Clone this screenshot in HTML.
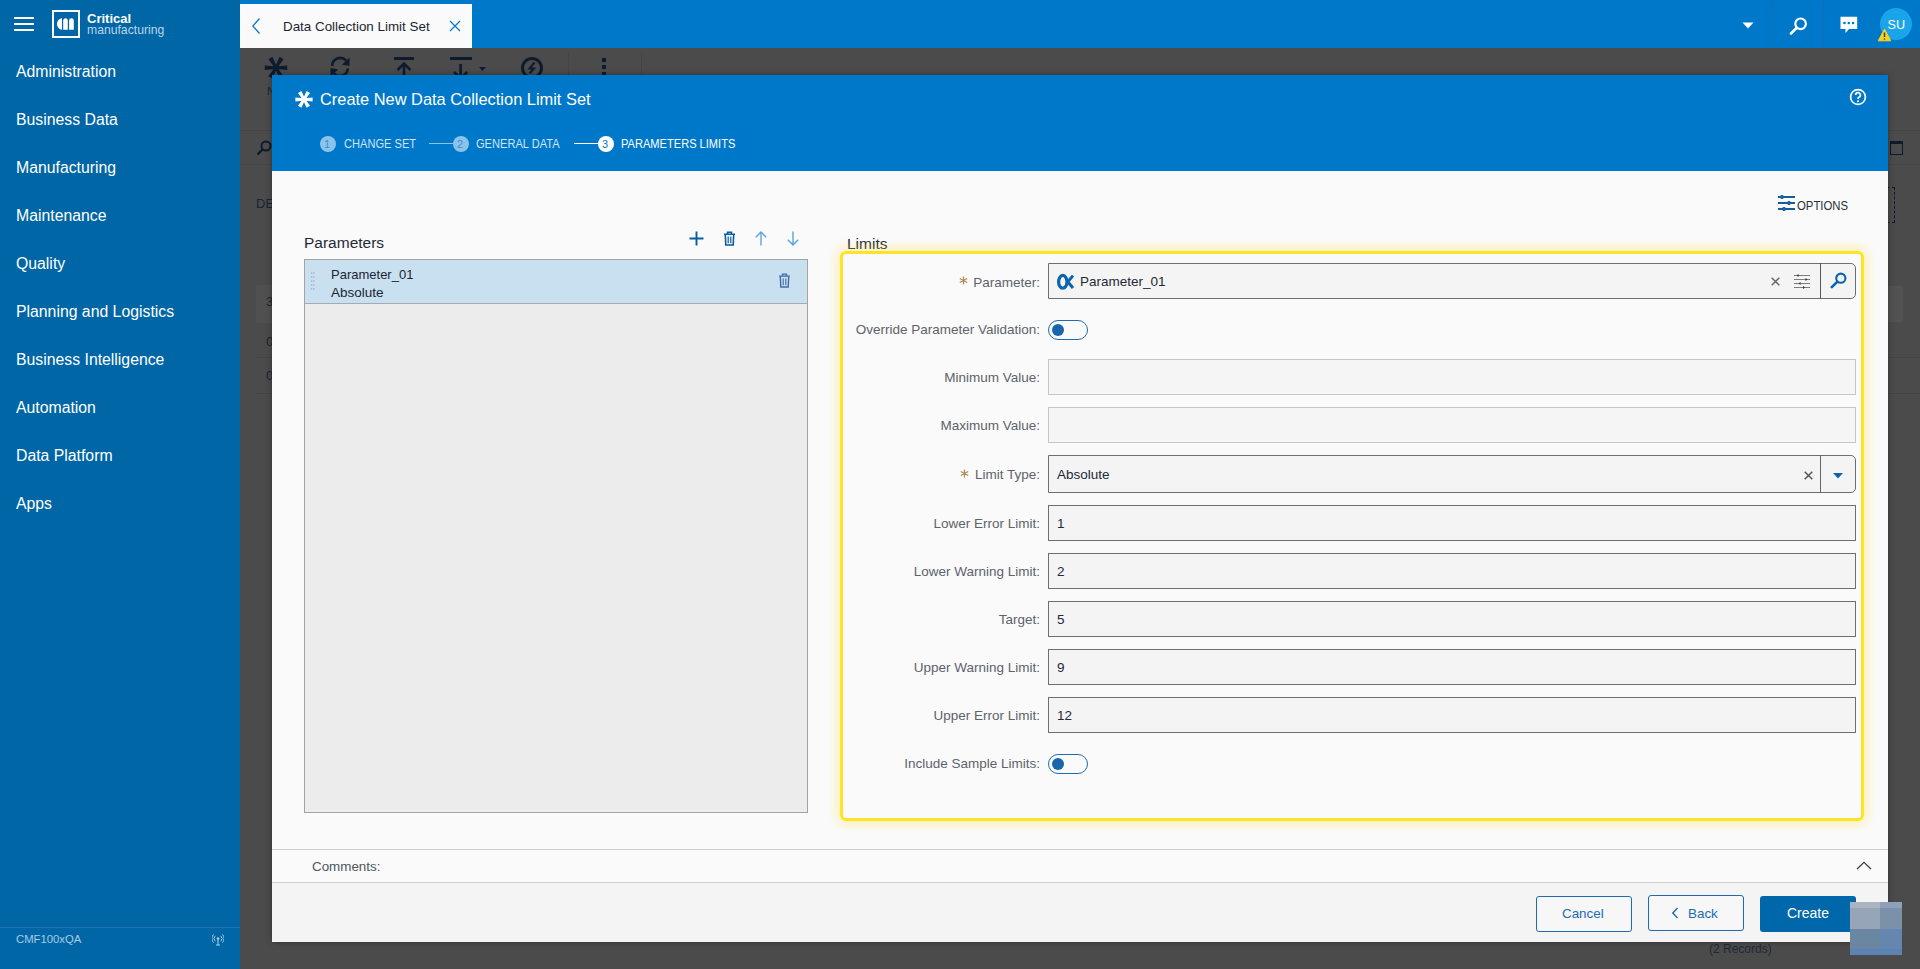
<!DOCTYPE html>
<html><head><meta charset="utf-8">
<style>
*{margin:0;padding:0;box-sizing:border-box}
html,body{width:1920px;height:969px;overflow:hidden;background:#4b4b4b;font-family:"Liberation Sans",sans-serif}
.a{position:absolute}
.t{position:absolute;white-space:nowrap;line-height:1}
#side{left:0;top:0;width:240px;height:969px;background:#0066a6}
#top{left:240px;top:0;width:1680px;height:48px;background:#0078c9}
.nav{left:16px;color:#fff;font-size:15.8px}
#modal{left:272px;top:75px;width:1616px;height:867px;background:#fafafa;box-shadow:0 0 6px rgba(0,0,0,.35)}
#mh{left:0;top:0;width:1616px;height:96px;background:#0078c9}
.lbl{color:#5d636a;font-size:13.5px;text-align:right;width:300px;left:468px}
.inp{left:1048px;width:808px;height:36px;background:#f4f4f4;border:1px solid #6e6e6e}
.inp.dis{border-color:#c6c6c6;background:#f5f5f5}
.val{color:#1f2a36;font-size:13.5px;left:1057px}
.tog{left:776px;width:40px;height:20px;border:1.5px solid #1d6bb0;border-radius:10px;background:#fafafa}
.tog i{position:absolute;left:3px;top:2.5px;width:12px;height:12px;border-radius:50%;background:#1a66ad}
</style></head><body>
<div id="side" class="a">
  <!-- hamburger -->
  <div class="a" style="left:14px;top:17px;width:20px;height:2px;background:#fff"></div>
  <div class="a" style="left:14px;top:23px;width:20px;height:2px;background:#fff"></div>
  <div class="a" style="left:14px;top:29px;width:20px;height:2px;background:#fff"></div>
  <!-- logo -->
  <div class="a" style="left:52px;top:10px;width:28px;height:28px;border:2px solid #fff"></div>
  <svg class="a" style="left:50px;top:8px" width="32" height="32" viewBox="0 0 32 32">
    <path d="M12 10.2 A5 5.8 0 0 0 12 21.8 Z" fill="#fff"/>
    <path d="M13.2 21.8 V12.5 A2.3 2.3 0 0 1 17.8 12.5 V21.8Z" fill="#fff"/>
    <path d="M19.1 21.8 V12.5 A2.35 2.35 0 0 1 23.8 12.5 V21.8Z" fill="#fff"/>
  </svg>
  <div class="t" style="left:87px;top:12px;font-size:13px;font-weight:bold;color:#fff">Critical</div>
  <div class="t" style="left:87px;top:24px;font-size:12.2px;color:#bcd5ea">manufacturing</div>

  <div class="t nav" style="top:64px">Administration</div>
  <div class="t nav" style="top:112px">Business Data</div>
  <div class="t nav" style="top:160px">Manufacturing</div>
  <div class="t nav" style="top:208px">Maintenance</div>
  <div class="t nav" style="top:256px">Quality</div>
  <div class="t nav" style="top:304px">Planning and Logistics</div>
  <div class="t nav" style="top:352px">Business Intelligence</div>
  <div class="t nav" style="top:400px">Automation</div>
  <div class="t nav" style="top:448px">Data Platform</div>
  <div class="t nav" style="top:496px">Apps</div>

  <div class="a" style="left:0;top:927px;width:240px;height:1px;background:#1f74ae"></div>
  <svg class="a" style="left:212px;top:934px" width="12" height="12" viewBox="0 0 12 12"><circle cx="6" cy="4.5" r="1.3" fill="#a9cbe6"/><path d="M6 5 V11 M4 11 H8" stroke="#a9cbe6" stroke-width="1.1"/><path d="M3.2 1.8 A3.8 3.8 0 0 0 3.2 7.2 M8.8 1.8 A3.8 3.8 0 0 1 8.8 7.2 M1.5 0.5 A5.8 5.8 0 0 0 1.5 8.5 M10.5 0.5 A5.8 5.8 0 0 1 10.5 8.5" fill="none" stroke="#a9cbe6" stroke-width="1"/></svg>
  <div class="t" style="left:16px;top:934px;font-size:11.3px;color:#a9cbe6">CMF100xQA</div>
</div>

<div id="top" class="a">
  <div class="a" style="left:0;top:4px;width:232px;height:44px;background:#fafafa"></div>
  <svg class="a" style="left:11px;top:17px" width="10" height="18" viewBox="0 0 10 18"><path d="M8.5 1.5 L1.8 9 L8.5 16.5" fill="none" stroke="#0a78c8" stroke-width="1.3"/></svg>
  <div class="t" style="left:43px;top:20px;font-size:13.4px;color:#1b2633">Data Collection Limit Set</div>
  <svg class="a" style="left:209px;top:20px" width="12" height="12" viewBox="0 0 12 12"><path d="M1 1 L11 11 M11 1 L1 11" fill="none" stroke="#0a78c8" stroke-width="1.3"/></svg>
  <!-- dropdown -->
  <svg class="a" style="left:1502px;top:22px" width="12" height="7" viewBox="0 0 12 7"><path d="M0.5 0.5 L11.5 0.5 L6 6.5Z" fill="#fff"/></svg>
  <div class="a" style="left:1532px;top:0;width:0;height:48px;border-left:1px dotted #2366a0"></div>
  <div class="a" style="left:1583px;top:0;width:0;height:48px;border-left:1px dotted #2366a0"></div>
  <!-- search -->
  <svg class="a" style="left:1549px;top:17px" width="19" height="18" viewBox="0 0 19 18"><circle cx="11.6" cy="6.8" r="5.3" fill="none" stroke="#fff" stroke-width="2.2"/><path d="M7.8 10.8 L2 16.5" stroke="#fff" stroke-width="2.6" stroke-linecap="round"/></svg>
  <!-- chat -->
  <svg class="a" style="left:1600px;top:16px" width="18" height="18" viewBox="0 0 18 18"><path d="M0.5 0.7 H17.2 V13 H9 L5.5 17 V13 H0.5Z" fill="#fff"/><circle cx="4.5" cy="7" r="1.3" fill="#0078c9"/><circle cx="8.8" cy="7" r="1.3" fill="#0078c9"/><circle cx="13.1" cy="7" r="1.3" fill="#0078c9"/></svg>
  <!-- avatar -->
  <div class="a" style="left:1640px;top:8px;width:32px;height:32px;border-radius:50%;background:#1aa5ea"></div>
  <div class="t" style="left:1647.5px;top:18.5px;font-size:12.6px;color:#fff">SU</div>
  <svg class="a" style="left:1637px;top:28px" width="15" height="14" viewBox="0 0 15 14"><path d="M7.5 1.2 L13.8 12.8 H1.2Z" fill="#f7d21e" stroke="#f7d21e" stroke-width="1" stroke-linejoin="round"/><path d="M7.5 4.5 V9" stroke="#3a3a2a" stroke-width="1.4"/><circle cx="7.5" cy="11" r="0.8" fill="#3a3a2a"/></svg>
</div>

<!-- background page behind overlay -->
<div class="a" style="left:240px;top:48px;width:1680px;height:921px;background:#4b4b4b">
  <!-- toolbar icons -->
  <svg class="a" style="left:24px;top:8px" width="24" height="24" viewBox="0 0 24 24"><path d="M12.00 12.90 L23.20 14.00 L23.20 9.40 L12.00 10.50Z M10.96 12.30 L15.61 22.55 L19.59 20.25 L13.04 11.10Z M10.96 11.10 L4.41 20.25 L8.39 22.55 L13.04 12.30Z M12.00 10.50 L0.80 9.40 L0.80 14.00 L12.00 12.90Z M13.04 11.10 L8.39 0.85 L4.41 3.15 L10.96 12.30Z M13.04 12.30 L19.59 3.15 L15.61 0.85 L10.96 11.10Z" fill="#0e1b2d"/></svg>
  <svg class="a" style="left:88px;top:7px" width="24" height="24" viewBox="0 0 24 24"><path d="M4.2 11 A8 8 0 0 1 18 5.5" fill="none" stroke="#0e1b2d" stroke-width="2.6"/><path d="M21.5 2.5 L21.5 10.8 L13.8 9.8Z" fill="#0e1b2d"/><path d="M19.8 13.5 A8 8 0 0 1 6 18.5" fill="none" stroke="#0e1b2d" stroke-width="2.6"/><path d="M2.5 13 L2.5 21.5 L10.2 14.5Z" fill="#0e1b2d"/></svg>
  <svg class="a" style="left:152px;top:7px" width="24" height="24" viewBox="0 0 24 24"><path d="M2 3.5 H22" stroke="#0e1b2d" stroke-width="3"/><path d="M12 9 V24" stroke="#0e1b2d" stroke-width="2.6"/><path d="M5.5 15 L12 8.5 L18.5 15" fill="none" stroke="#0e1b2d" stroke-width="2.6"/></svg>
  <svg class="a" style="left:208px;top:7px" width="24" height="24" viewBox="0 0 24 24"><path d="M2 3.5 H24" stroke="#0e1b2d" stroke-width="3"/><path d="M12.6 9 V23" stroke="#0e1b2d" stroke-width="2.6"/><path d="M6 17 L12.6 23.5 L19.2 17" fill="none" stroke="#0e1b2d" stroke-width="2.6"/></svg>
  <svg class="a" style="left:239px;top:19px" width="7" height="4" viewBox="0 0 7 4"><path d="M0 0 H7 L3.5 4Z" fill="#0e1b2d"/></svg>
  <svg class="a" style="left:280px;top:8px" width="24" height="24" viewBox="0 0 24 24"><circle cx="12" cy="12" r="9.5" fill="none" stroke="#0e1b2d" stroke-width="3"/><path d="M14.5 6.5 L9.5 12.5 H14 L9.5 17.5" fill="none" stroke="#0e1b2d" stroke-width="2"/></svg>
  <div class="a" style="left:328px;top:5px;width:1px;height:27px;background:#444"></div>
  <div class="a" style="left:362px;top:10px;width:4px;height:4px;background:#0e1b2d"></div>
  <div class="a" style="left:362px;top:17px;width:4px;height:4px;background:#0e1b2d"></div>
  <div class="a" style="left:362px;top:24px;width:4px;height:3px;background:#0e1b2d"></div>
  <div class="a" style="left:401px;top:5px;width:1px;height:27px;background:#444"></div>
  <div class="t" style="left:27px;top:38px;font-size:11px;color:#1a2433">N</div>
  <!-- left strip details -->
  <div class="a" style="left:0;top:82px;width:32px;height:1px;background:#444"></div>
  <svg class="a" style="left:16px;top:92px" width="16" height="16" viewBox="0 0 16 16"><circle cx="10" cy="6" r="4.5" fill="none" stroke="#0e1b2d" stroke-width="2"/><path d="M6.8 9.2 L1.5 14.5" stroke="#0e1b2d" stroke-width="2.4"/></svg>
  <div class="a" style="left:0;top:116px;width:32px;height:1px;background:#444"></div>
  <div class="t" style="left:16px;top:149px;font-size:13px;color:#1a2433">DE</div>
  <div class="a" style="left:16px;top:237px;width:16px;height:38px;background:#505050"></div>
  <div class="t" style="left:26px;top:247px;font-size:13px;color:#1a2433">3</div>
  <div class="t" style="left:26px;top:287px;font-size:13px;color:#1a2433">0</div>
  <div class="a" style="left:16px;top:309px;width:16px;height:1px;background:#444"></div>
  <div class="t" style="left:26px;top:321px;font-size:13px;color:#1a2433">0</div>
  <div class="a" style="left:16px;top:345px;width:16px;height:1px;background:#444"></div>
  <!-- right strip details -->
  <div class="a" style="left:1648px;top:82px;width:32px;height:1px;background:#444"></div>
  <div class="a" style="left:1650px;top:93px;width:13px;height:14px;border:1px solid #0e1b2d;border-top-width:3px"></div>
  <div class="a" style="left:1648px;top:116px;width:32px;height:1px;background:#444"></div>
  <div class="a" style="left:1630px;top:139px;width:25px;height:36px;border:1px dashed #0e1b2d"></div>
  <div class="a" style="left:1648px;top:238px;width:15px;height:36px;background:#525252"></div>
  <div class="a" style="left:1648px;top:309px;width:32px;height:1px;background:#444"></div>
  <div class="a" style="left:1648px;top:345px;width:32px;height:1px;background:#444"></div>
  <div class="t" style="left:1469px;top:895px;font-size:12px;color:#1f2936">(2 Records)</div>
</div>

<div id="modal" class="a">
  <div id="mh" class="a">
    <svg class="a" style="left:23px;top:15px" width="18" height="18" viewBox="0 0 18 18"><path d="M9.00 10.55 L17.60 11.40 L17.60 7.40 L9.00 8.25Z M8.00 9.97 L11.57 17.85 L15.03 15.85 L10.00 8.83Z M8.00 8.83 L2.97 15.85 L6.43 17.85 L10.00 9.97Z M9.00 8.25 L0.40 7.40 L0.40 11.40 L9.00 10.55Z M10.00 8.82 L6.43 0.95 L2.97 2.95 L8.00 9.98Z M10.00 9.97 L15.03 2.95 L11.57 0.95 L8.00 8.83Z" fill="#fff"/></svg>
    <div class="t" style="left:48px;top:16px;font-size:16.4px;color:#fff">Create New Data Collection Limit Set</div>
    <svg class="a" style="left:1577px;top:13px" width="18" height="18" viewBox="0 0 18 18"><circle cx="9" cy="9" r="7.4" fill="none" stroke="#fff" stroke-width="1.7"/><path d="M6.6 7 A2.4 2.4 0 1 1 9.8 9.3 C9 9.6 9 10.2 9 11" fill="none" stroke="#fff" stroke-width="1.7"/><circle cx="9" cy="13.3" r="1.05" fill="#fff"/></svg>
    <!-- stepper -->
    <div class="a" style="left:48px;top:61px;width:16px;height:16px;border-radius:50%;background:#8cc3eb"></div>
    <div class="t" style="left:52px;top:64px;font-size:11px;color:#3f8fd0">1</div>
    <div class="t" style="left:71.5px;top:63px;font-size:12.6px;color:#cfe6f7;transform:scaleX(0.88);transform-origin:0 0">CHANGE SET</div>
    <div class="a" style="left:157px;top:68px;width:24px;height:1px;background:#8cc3eb"></div>
    <div class="a" style="left:181px;top:61px;width:16px;height:16px;border-radius:50%;background:#8cc3eb"></div>
    <div class="t" style="left:185px;top:64px;font-size:11px;color:#3f8fd0">2</div>
    <div class="t" style="left:204px;top:63px;font-size:12.6px;color:#cfe6f7;transform:scaleX(0.88);transform-origin:0 0">GENERAL DATA</div>
    <div class="a" style="left:302px;top:68px;width:24px;height:1px;background:#fff"></div>
    <div class="a" style="left:326px;top:61px;width:16px;height:16px;border-radius:50%;background:#fff"></div>
    <div class="t" style="left:330px;top:64px;font-size:11px;color:#0078c9">3</div>
    <div class="t" style="left:349px;top:63px;font-size:12.6px;color:#fff;transform:scaleX(0.88);transform-origin:0 0">PARAMETERS LIMITS</div>
  </div>
  <!-- options -->
  <svg class="a" style="left:1506px;top:120px" width="17" height="17" viewBox="0 0 17 17"><path d="M0 2 H17 M0 8 H17 M0 14 H17" stroke="#1a5c96" stroke-width="1.8"/><path d="M4 0 V4 M11 6 V10 M6 12 V16" stroke="#1a66aa" stroke-width="2.6"/></svg>
  <div class="t" style="left:1525px;top:124.5px;font-size:12.6px;color:#26313c;transform:scaleX(0.9);transform-origin:0 0">OPTIONS</div>

  <!-- parameters list -->
  <div class="t" style="left:32px;top:160px;font-size:15.5px;color:#1e2a36">Parameters</div>
  <svg class="a" style="left:417px;top:156px" width="15" height="15" viewBox="0 0 15 15"><path d="M7.5 0.5 V14.5 M0.5 7.5 H14.5" stroke="#0a5c9e" stroke-width="1.9"/></svg>
  <svg class="a" style="left:451px;top:156px" width="13" height="15" viewBox="0 0 13 15"><path d="M1 3.2 H12 M4.5 3 V1.2 H8.5 V3" fill="none" stroke="#0a5c9e" stroke-width="1.5"/><path d="M2.3 3.5 L2.8 14 H10.2 L10.7 3.5" fill="none" stroke="#0a5c9e" stroke-width="1.6"/><path d="M5.2 5.5 V12.3 M7.8 5.5 V12.3" stroke="#0a5c9e" stroke-width="1.2"/></svg>
  <svg class="a" style="left:483px;top:156px" width="12" height="15" viewBox="0 0 12 15"><path d="M6 1 V14.5 M0.8 6.3 L6 1 L11.2 6.3" fill="none" stroke="#5aa6dc" stroke-width="1.4"/></svg>
  <svg class="a" style="left:515px;top:156px" width="12" height="15" viewBox="0 0 12 15"><path d="M6 0.5 V14 M0.8 8.7 L6 14 L11.2 8.7" fill="none" stroke="#5aa6dc" stroke-width="1.4"/></svg>
  <div class="a" style="left:32px;top:184px;width:504px;height:554px;background:#ececec;border:1px solid #a3a3a3"></div>
  <div class="a" style="left:33px;top:185px;width:502px;height:44px;background:#c9e0f1;border-bottom:1px solid #a3acb3"></div>
  <svg class="a" style="left:39px;top:197px" width="4" height="19" viewBox="0 0 4 19"><path d="M0 1 H4 M0 5 H4 M0 9 H4 M0 13 H4 M0 17 H4" stroke="#8c9aa6" stroke-width="1.2" stroke-dasharray="1.2 1"/></svg>
  <div class="t" style="left:59px;top:192.5px;font-size:13px;color:#1b2633">Parameter_01</div>
  <div class="t" style="left:59px;top:210.5px;font-size:13.5px;color:#1b2633">Absolute</div>
  <svg class="a" style="left:506px;top:198px" width="13" height="15" viewBox="0 0 13 15"><path d="M1 3.2 H12 M4.5 3 V1.2 H8.5 V3" fill="none" stroke="#3f6da3" stroke-width="1.3"/><path d="M2.3 3.5 L2.8 14 H10.2 L10.7 3.5" fill="none" stroke="#3f6da3" stroke-width="1.4"/><path d="M5.2 5.5 V12.3 M7.8 5.5 V12.3" stroke="#3f6da3" stroke-width="1.1"/></svg>

  <!-- limits -->
  <div class="t" style="left:575px;top:161px;font-size:15.5px;color:#1e2a36">Limits</div>
  <div class="a" style="left:568px;top:176px;width:1024px;height:570px;border:3px solid #ffe22a;border-radius:6px;box-shadow:0 0 10px 4px rgba(255,226,60,.35)"></div>
  <div class="t lbl" style="top:201px">Parameter:</div>
  <svg class="a" style="left:687px;top:201px" width="9" height="9" viewBox="0 0 9 9"><path d="M4.5 0.5 V8.5 M0.8 2.5 L8.2 6.5 M8.2 2.5 L0.8 6.5" stroke="#b38a52" stroke-width="1.3"/></svg>
  <div class="a inp" style="left:776px;top:188px;border-radius:0 5px 5px 0"></div>
  <div class="a" style="left:1548px;top:188px;width:1px;height:36px;background:#555"></div>
  <svg class="a" style="left:780px;top:193px" width="28" height="28" viewBox="0 0 28 28"><ellipse cx="10.8" cy="13.8" rx="4.2" ry="6.4" fill="none" stroke="#0a64ad" stroke-width="3.2"/><path d="M21 7.6 L15.8 13.8 L21 20" fill="none" stroke="#0a64ad" stroke-width="3"/></svg>
  <div class="t val" style="left:808px;top:200px">Parameter_01</div>
  <svg class="a" style="left:1499px;top:202px" width="9" height="9" viewBox="0 0 9 9"><path d="M0.7 0.7 L8.3 8.3 M8.3 0.7 L0.7 8.3" stroke="#666" stroke-width="1.5"/></svg>
  <svg class="a" style="left:1522px;top:199px" width="16" height="15" viewBox="0 0 16 15"><path d="M0 1.5 H16 M0 5.5 H16 M0 9.5 H16 M0 13.5 H16" stroke="#7d7d7d" stroke-width="1"/><path d="M2.5 1.5 L4.5 0 V3Z M13.5 5.5 L11.5 4 V7Z M4.5 9.5 L6.5 8 V11Z M11 13.5 L9 12 V15Z" fill="#333"/></svg>
  <svg class="a" style="left:1558px;top:197px" width="17" height="17" viewBox="0 0 17 17"><circle cx="10.8" cy="6.2" r="4.6" fill="none" stroke="#0a64ad" stroke-width="2.1"/><path d="M7.4 9.6 L1.8 15.2" stroke="#0a64ad" stroke-width="2.6" stroke-linecap="round"/></svg>
  <div class="t lbl" style="top:248px">Override Parameter Validation:</div>
  <div class="a tog" style="top:245px"><i></i></div>
  <div class="t lbl" style="top:296px">Minimum Value:</div>
  <div class="a inp dis" style="left:776px;top:284px"></div>
  <div class="t lbl" style="top:344px">Maximum Value:</div>
  <div class="a inp dis" style="left:776px;top:332px"></div>
  <div class="t lbl" style="top:393px">Limit Type:</div>
  <svg class="a" style="left:688px;top:394px" width="9" height="9" viewBox="0 0 9 9"><path d="M4.5 0.5 V8.5 M0.8 2.5 L8.2 6.5 M8.2 2.5 L0.8 6.5" stroke="#b38a52" stroke-width="1.3"/></svg>
  <div class="a inp" style="left:776px;top:380px;height:38px;border-radius:0 5px 5px 0"></div>
  <div class="a" style="left:1548px;top:380px;width:1px;height:38px;background:#666"></div>
  <div class="t val" style="left:785px;top:393px">Absolute</div>
  <svg class="a" style="left:1532px;top:396px" width="9" height="9" viewBox="0 0 9 9"><path d="M0.7 0.7 L8.3 8.3 M8.3 0.7 L0.7 8.3" stroke="#555" stroke-width="1.5"/></svg>
  <svg class="a" style="left:1561px;top:397.5px" width="10" height="6" viewBox="0 0 10 6"><path d="M0 0 H10 L5 5.5Z" fill="#0a64ad"/></svg>
  <div class="t lbl" style="top:442px">Lower Error Limit:</div>
  <div class="a inp" style="left:776px;top:430px"></div>
  <div class="t val" style="left:785px;top:442px">1</div>
  <div class="t lbl" style="top:490px">Lower Warning Limit:</div>
  <div class="a inp" style="left:776px;top:478px"></div>
  <div class="t val" style="left:785px;top:490px">2</div>
  <div class="t lbl" style="top:538px">Target:</div>
  <div class="a inp" style="left:776px;top:526px"></div>
  <div class="t val" style="left:785px;top:538px">5</div>
  <div class="t lbl" style="top:586px">Upper Warning Limit:</div>
  <div class="a inp" style="left:776px;top:574px"></div>
  <div class="t val" style="left:785px;top:586px">9</div>
  <div class="t lbl" style="top:634px">Upper Error Limit:</div>
  <div class="a inp" style="left:776px;top:622px"></div>
  <div class="t val" style="left:785px;top:634px">12</div>
  <div class="t lbl" style="top:682px">Include Sample Limits:</div>
  <div class="a tog" style="top:679px"><i></i></div>
  <!-- comments -->
  <div class="a" style="left:0;top:774px;width:1616px;height:1px;background:#cdd0d3"></div>
  <div class="t" style="left:40px;top:785px;font-size:13.4px;color:#50565d">Comments:</div>
  <svg class="a" style="left:1584px;top:786px" width="16" height="9" viewBox="0 0 16 9"><path d="M1 8 L8 1.3 L15 8" fill="none" stroke="#3a4550" stroke-width="1.3"/></svg>
  <div class="a" style="left:0;top:807px;width:1616px;height:60px;background:#f4f4f4;border-top:1px solid #cdd0d3"></div>
  <!-- buttons -->
  <div class="a" style="left:1264px;top:821px;width:96px;height:36px;border:1.5px solid #1d6bb0;border-radius:3px;background:#f7f7f7"></div>
  <div class="t" style="left:1290px;top:832px;font-size:13.4px;color:#1d6bb0">Cancel</div>
  <div class="a" style="left:1376px;top:820px;width:96px;height:36px;border:1.5px solid #1d6bb0;border-radius:3px;background:#f7f7f7"></div>
  <svg class="a" style="left:1399px;top:832px" width="8" height="12" viewBox="0 0 8 12"><path d="M6.5 1 L1.8 6 L6.5 11" fill="none" stroke="#1d6bb0" stroke-width="1.4"/></svg>
  <div class="t" style="left:1416px;top:832px;font-size:13.4px;color:#1d6bb0">Back</div>
  <div class="a" style="left:1488px;top:821px;width:96px;height:36px;border-radius:3px;background:#0068aa"></div>
  <div class="t" style="left:1515px;top:831px;font-size:14px;color:#fff">Create</div>
</div>
<!-- odd square -->
<div class="a" style="left:1850px;top:902px;width:52px;height:53px;background:#6f88a3"></div>
<div class="a" style="left:1850px;top:902px;width:30px;height:6px;background:#adb4bf"></div>
<div class="a" style="left:1880px;top:902px;width:22px;height:6px;background:#8ea1b8"></div>
<div class="a" style="left:1850px;top:908px;width:30px;height:21px;background:#97a5b8"></div>
<div class="a" style="left:1880px;top:908px;width:22px;height:21px;background:#7b90a9"></div>
<div class="a" style="left:1850px;top:929px;width:30px;height:20px;background:#6a86a0"></div>
<div class="a" style="left:1880px;top:929px;width:22px;height:20px;background:#6586ae"></div>
<div class="a" style="left:1850px;top:949px;width:52px;height:6px;background:#5c83b4"></div>
</body></html>
